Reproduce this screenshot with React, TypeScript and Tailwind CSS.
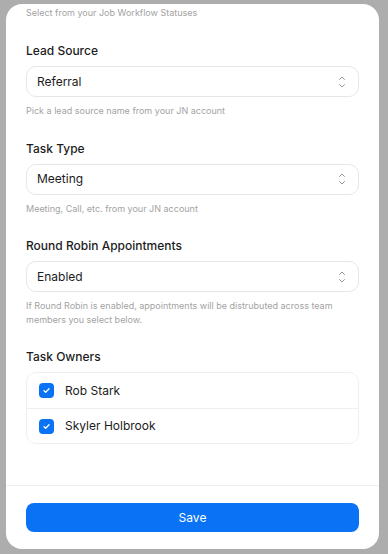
const fields = [
  {
    label: "Lead Source",
    value: "Referral",
    help: "Pick a lead source name from your JN account",
  },
  {
    label: "Task Type",
    value: "Meeting",
    help: "Meeting, Call, etc. from your JN account",
  },
  {
    label: "Round Robin Appointments",
    value: "Enabled",
    help: "If Round Robin is enabled, appointments will be distrubuted across team members you select below.",
  },
];

const owners = ["Rob Stark", "Skyler Holbrook"];

const UpDown = () => (
  <svg width="8" height="14" viewBox="0 0 8 14" fill="none">
    <path
      d="M1.5 4.5L4 2L6.5 4.5"
      stroke="#9a9a9a"
      strokeWidth="1"
      strokeLinecap="round"
      strokeLinejoin="round"
    />
    <path
      d="M1.5 9.5L4 12L6.5 9.5"
      stroke="#9a9a9a"
      strokeWidth="1"
      strokeLinecap="round"
      strokeLinejoin="round"
    />
  </svg>
);

const Check = () => (
  <span className="flex h-[15px] w-[15px] items-center justify-center rounded-[4px] bg-[#0a72f5]">
    <svg width="9" height="9" viewBox="0 0 9 9" fill="none">
      <path
        d="M2 4.7L3.7 6.3L7 2.8"
        stroke="#fff"
        strokeWidth="1.3"
        strokeLinecap="round"
        strokeLinejoin="round"
      />
    </svg>
  </span>
);

export default function App() {
  return (
    <div
      className="flex h-[554px] w-[388px] bg-[#adadad] pb-[5px] pl-[6px] pr-[9px] pt-[4px] text-[#1c1c1c]"
      style={{ fontFamily: "Inter, 'Noto Sans', sans-serif" }}
    >
      <div className="flex flex-1 flex-col overflow-hidden rounded-[16px] bg-white">
        <div className="flex-1 overflow-hidden px-5 pt-[2px]">
          <p className="text-[9px] leading-[14px] text-[#a3a3a3]">
            Select from your Job Workflow Statuses
          </p>
          {fields.map((f) => (
            <div key={f.label} className="mt-[22px]">
              <h3 className="text-[12px] font-medium leading-[18px]">
                {f.label}
              </h3>
              <div className="mt-[6px] flex h-[31px] items-center justify-between rounded-[10px] border border-[#e6e6e6] pl-[10px] pr-[12px]">
                <span className="text-[12px]">{f.value}</span>
                <UpDown />
              </div>
              <p className="mt-[7px] text-[9px] leading-[13.5px] text-[#a3a3a3]">
                {f.help}
              </p>
            </div>
          ))}
          <div className="mt-[22px]">
            <h3 className="text-[12px] font-medium leading-[18px]">
              Task Owners
            </h3>
            <div className="mt-[6px] rounded-[10px] border border-[#efefef]">
              {owners.map((o, i) => (
                <div
                  key={o}
                  className={`flex h-[35px] items-center gap-[11px] pl-[12px] ${i > 0 ? "border-t border-[#efefef]" : ""}`}
                >
                  <Check />
                  <span className="text-[12px]">{o}</span>
                </div>
              ))}
            </div>
          </div>
        </div>
        <div className="border-t border-[#f0f0f0] px-5 pb-[17px] pt-[17px]">
          <button className="h-[29px] w-full rounded-[8px] bg-[#0a72f5] text-[12px] text-white">
            Save
          </button>
        </div>
      </div>
    </div>
  );
}
